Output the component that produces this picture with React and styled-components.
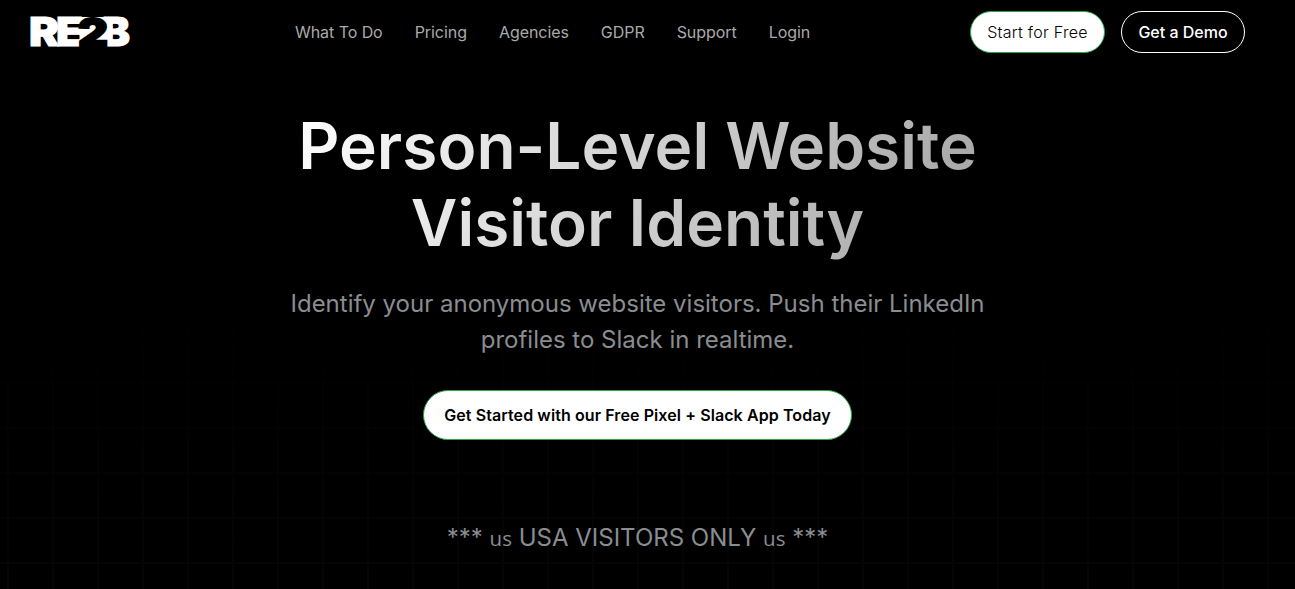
import React from "react";
import styled, { createGlobalStyle } from "styled-components";

const GlobalStyle = createGlobalStyle`
  * {
    box-sizing: border-box;
  }
  body {
    margin: 0;
    background-color: #000;
    font-family: Inter, "Liberation Sans", sans-serif;
  }
`;

const Wrapper = styled.div`
  height: 100vh;
  background-color: #000;
  background-image: linear-gradient(#000 300px, transparent 640px),
    linear-gradient(to right, #060606 2px, transparent 2px),
    linear-gradient(#060606 2px, transparent 2px);
  background-size: auto, 45px 45px, 45px 45px;
  background-position: 0 0, 7px 0, 0 22px;
`;

const Header = styled.header`
  display: flex;
  align-items: center;
  height: 64px;
  padding: 0 50px 0 30px;
`;

const Logo = styled.svg`
  display: block;
  width: 101px;
  height: 32px;
  overflow: visible;
  font-family: Inter, sans-serif;
  font-weight: 900;
  font-size: 40px;
`;

const Nav = styled.nav`
  display: flex;
  gap: 32px;
  margin-left: 164px;
  margin-right: auto;
`;

const NavLink = styled.a`
  color: #aaa;
  font-size: 16px;
  line-height: 24px;
  letter-spacing: -0.06px;
  text-decoration: none;
`;

const Actions = styled.div`
  display: flex;
  gap: 16px;
`;

const Button = styled.button`
  width: ${(props) => props.$width};
  height: ${(props) => (props.$large ? "50px" : "42px")};
  padding: 0;
  border: 1px solid ${(props) => (props.$outline ? "#fff" : "#28a745")};
  border-radius: 25px;
  background-color: ${(props) => (props.$outline ? "#000" : "#fff")};
  color: ${(props) => (props.$outline ? "#fff" : "#000")};
  font-family: inherit;
  font-size: 16px;
  font-weight: ${(props) => props.$weight};
  letter-spacing: ${(props) => props.$spacing};
  white-space: nowrap;
`;

const Hero = styled.main`
  display: flex;
  flex-direction: column;
  align-items: center;
  padding: 43px 20px 0 0;
  text-align: center;
`;

const Title = styled.h1`
  margin: 0;
  width: 700px;
  font-size: 64px;
  font-weight: 600;
  line-height: 77px;
  background: linear-gradient(114deg, #fff 0%, #a8a8a8 94%);
  background-clip: text;
  -webkit-background-clip: text;
  color: transparent;
`;

const Subtitle = styled.p`
  margin: 25px 0 32px;
  color: #8a8d90;
  font-size: 24px;
  line-height: 36px;
`;

const Notice = styled.p`
  margin: 80px 0 0;
  color: #8a8d90;
  font-size: 24px;
  line-height: 36px;
`;

const Country = styled.span`
  font-family: "Open Sans", sans-serif;
  font-size: 20.5px;
`;

const links = ["What To Do", "Pricing", "Agencies", "GDPR", "Support", "Login"];

const App = () => {
  return (
    <>
      <GlobalStyle />
      <Wrapper>
        <Header>
          {/* the 2 is cut out of the white band between E and B */}
          <Logo viewBox="0 0 101 32" fill="#fff" stroke="#fff">
            <text x="-1" y="30" textLength="30" lengthAdjust="spacingAndGlyphs">
              R
            </text>
            <text x="26" y="30" textLength="27" lengthAdjust="spacingAndGlyphs">
              E
            </text>
            <rect x="50" y="1.5" width="27" height="28.5" />
            <text x="72" y="30" textLength="28" lengthAdjust="spacingAndGlyphs">
              B
            </text>
            <text
              x="48"
              y="31"
              fill="#000"
              stroke="#000"
              strokeWidth="2"
              textLength="30"
              lengthAdjust="spacingAndGlyphs"
            >
              2
            </text>
          </Logo>
          <Nav>
            {links.map((link) => (
              <NavLink key={link}>{link}</NavLink>
            ))}
          </Nav>
          <Actions>
            <Button $width="135px" $weight={300} $spacing="0.28px">
              Start for Free
            </Button>
            <Button $width="124px" $outline $weight={500} $spacing="0">
              Get a Demo
            </Button>
          </Actions>
        </Header>
        <Hero>
          <Title>
            Person-Level Website
            <br />
            Visitor Identity
          </Title>
          <Subtitle>
            Identify your anonymous website visitors. Push their LinkedIn
            <br />
            profiles to Slack in realtime.
          </Subtitle>
          <Button $width="429px" $large $weight={600} $spacing="0.09px">
            Get Started with our Free Pixel + Slack App Today
          </Button>
          <Notice>
            *** <Country>us</Country> USA VISITORS ONLY <Country>us</Country> ***
          </Notice>
        </Hero>
      </Wrapper>
    </>
  );
};

export default App;
